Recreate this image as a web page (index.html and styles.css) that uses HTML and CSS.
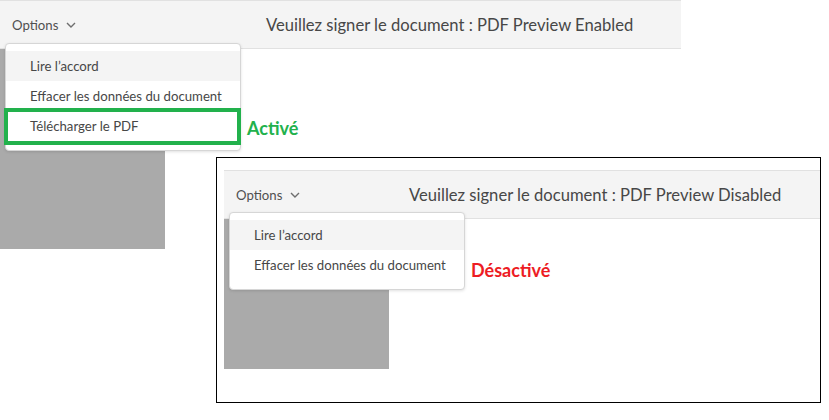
FILE: index.html
```html
<!DOCTYPE HTML>
<html>
 <head>
  <meta name="viewport" content="width=device-width, initial-scale=1.0">
  <link rel="stylesheet" href="styles.css">
 </head>
<body>
<div class="shot shot-enabled">
  <div class="header">
    <div class="options">Options
      <svg class="chevron" width="10" height="6" viewBox="0 0 10 6"><path d="M1 1 L5 5 L9 1" fill="none" stroke="#6e6e6e" stroke-width="1.4"/></svg>
    </div>
    <div class="title">Veuillez signer le document : PDF Preview Enabled</div>
  </div>
  <div class="page"></div>
  <div class="menu">
    <div class="item hover">Lire l’accord</div>
    <div class="item">Effacer les données du document</div>
    <div class="item marked">Télécharger le PDF</div>
  </div>
  <div class="label on">Activé</div>
</div>

<div class="shot shot-disabled">
  <div class="header">
    <div class="options">Options
      <svg class="chevron" width="10" height="6" viewBox="0 0 10 6"><path d="M1 1 L5 5 L9 1" fill="none" stroke="#6e6e6e" stroke-width="1.4"/></svg>
    </div>
    <div class="title">Veuillez signer le document : PDF Preview Disabled</div>
  </div>
  <div class="page small"></div>
  <div class="menu">
    <div class="item hover">Lire l’accord</div>
    <div class="item">Effacer les données du document</div>
  </div>
  <div class="label off">Désactivé</div>
</div>
</body>
</html>
```

FILE: styles.css
```css
* {
  box-sizing: border-box;
}
body {
  margin: 0;
  background: #fff;
  font-family: Lato, "Noto Sans", sans-serif;
  color: #4b4b4b;
}
.shot {
  position: absolute;
}
.shot-enabled {
  left: 0;
  top: 0;
  width: 681px;
  height: 248px;
}
.shot-disabled {
  left: 216px;
  top: 157px;
  width: 605px;
  height: 246px;
  border: 1px solid #000;
  padding: 12px 0 0 7px;
}
.header {
  height: 49px;
  background: #f4f4f4;
  border-top: 1px solid #e1e1e1;
  border-bottom: 1px solid #e1e1e1;
  display: flex;
  align-items: center;
}
.options {
  padding-left: 12px;
  font-size: 13.2px;
  color: #505050;
  width: 266px;
  display: flex;
  align-items: center;
}
.shot-disabled .options {
  width: 185px;
}
.chevron {
  margin-left: 8px;
  margin-top: 1px;
}
.title {
  font-size: 16.6px;
  color: #474747;
}
.page {
  width: 165px;
  height: 200px;
  background: #aaa;
}
.page.small {
  height: 150px;
}
.menu {
  position: absolute;
  left: 5px;
  top: 43px;
  width: 236px;
  background: #fff;
  border: 1px solid #d6d6d6;
  border-radius: 4px;
  box-shadow: 0 1px 3px rgba(0,0,0,0.12);
  padding: 7px 0 9px;
}
.shot-disabled .menu {
  left: 12px;
  top: 54px;
}
.item {
  height: 30px;
  line-height: 30px;
  padding-left: 24px;
  font-size: 13.2px;
  color: #474747;
  white-space: nowrap;
}
.item.hover {
  background: #f4f4f4;
}
.item.marked {
  position: relative;
}
.item.marked::after {
  content: "";
  position: absolute;
  left: -2px;
  right: -1px;
  top: -3px;
  bottom: -4px;
  border: 4px solid #22b14c;
}
.label {
  position: absolute;
  font-size: 18px;
  font-weight: bold;
}
.label.on {
  left: 247px;
  top: 117px;
  color: #22b14c;
}
.label.off {
  left: 254px;
  top: 101px;
  color: #ed1c24;
}
```
